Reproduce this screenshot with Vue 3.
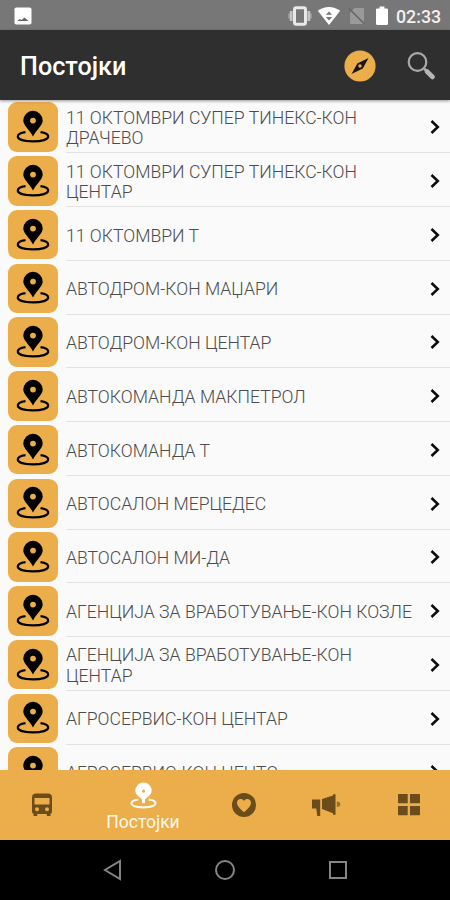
<script setup>
const stops = [
  '11 ОКТОМВРИ СУПЕР ТИНЕКС-КОН ДРАЧЕВО',
  '11 ОКТОМВРИ СУПЕР ТИНЕКС-КОН ЦЕНТАР',
  '11 ОКТОМВРИ Т',
  'АВТОДРОМ-КОН МАЏАРИ',
  'АВТОДРОМ-КОН ЦЕНТАР',
  'АВТОКОМАНДА МАКПЕТРОЛ',
  'АВТОКОМАНДА Т',
  'АВТОСАЛОН МЕРЦЕДЕС',
  'АВТОСАЛОН МИ-ДА',
  'АГЕНЦИЈА ЗА ВРАБОТУВАЊЕ-КОН КОЗЛЕ',
  'АГЕНЦИЈА ЗА ВРАБОТУВАЊЕ-КОН ЦЕНТАР',
  'АГРОСЕРВИС-КОН ЦЕНТАР',
  'АГРОСЕРВИС-КОН ЦЕНТО',
]
</script>

<template>
  <div class="screen">
    <div class="status">
      <svg class="picture" width="18" height="18" viewBox="0 0 18 18">
        <rect x="0.5" y="0.5" width="17" height="17" rx="1.8" fill="#fff" />
        <path d="M3.2 14 5.8 12l1.8 1 2.800-2.600 4.200 3.600z" fill="#666" />
      </svg>
      <svg width="24" height="20" viewBox="0 0 24 20">
        <path d="M3.200 5v10M20.800 5v10" stroke="#c4c4c4" stroke-width="2.800" />
        <path d="M1.200 7.500v5M22.800 7.500v5" stroke="#aaa" stroke-width="1.600" />
        <rect x="6.500" y="1.800" width="11" height="16.400" rx="1.800" fill="#777" stroke="#e9e9e9" stroke-width="3" />
      </svg>
      <svg class="wifi" width="24" height="20" viewBox="0 0 24 20">
        <path d="M.8 4.800C7.500-.3 16.500-.3 23.200 4.800L12 19z" fill="#fff" />
        <path d="m8.800 8.800 3.200-3.400 3.200 3.400zM8.800 11h6.400L12 14.400z" fill="#777" />
      </svg>
      <svg class="sim" width="18" height="20" viewBox="0 0 18 20">
        <path d="M6.500 2H16v16H2V7z" fill="#999" />
        <path d="M1 2.500 16.500 18" stroke="#666" stroke-width="1.600" />
      </svg>
      <svg class="battery" width="12" height="20" viewBox="0 0 12 20">
        <path d="M3.600.5h4.800v2H11q1 0 1 1v14q0 1.500-1.500 1.500h-9Q0 19 0 17.500v-14q0-1 1-1h2.600z" fill="#fff" />
      </svg>
      <span class="clock">02:33</span>
    </div>

    <header class="toolbar">
      <h1>Постојки</h1>
      <svg class="compass" width="32" height="32" viewBox="0 0 32 32">
        <circle cx="16" cy="16" r="15.600" fill="#ebae4b" />
        <path d="M24.500 8 18.800 18.600 7.500 24 13.300 13.400z" fill="#171717" />
        <circle cx="16" cy="16" r="1.700" fill="#ebae4b" />
      </svg>
      <svg class="search" width="30" height="30" viewBox="0 0 30 30">
        <circle cx="11.500" cy="11" r="8.800" fill="none" stroke="#a9a9a9" stroke-width="2.200" />
        <path d="m18 17.500 3 3" stroke="#a9a9a9" stroke-width="2.500" />
        <path d="m21 20.500 5.600 5.500" stroke="#b5b5b5" stroke-width="4.600" stroke-linecap="round" />
      </svg>
    </header>

    <main class="list">
      <div v-for="stop in stops" :key="stop" class="row">
        <div class="tile">
          <svg width="34" height="34" viewBox="0 0 34 34">
            <path d="M9.500 22.200C4 23 1.800 24.600 1.800 26.600c0 3 6.400 4.800 15.200 4.800s15.200-1.800 15.200-4.800c0-2-2.200-3.600-7.700-4.400" fill="none" stroke="#000" stroke-width="2.200" />
            <path fill-rule="evenodd" d="M17 .8A9.700 9.700 0 0 0 7.300 10.500C7.300 15.500 13 19 17 26.500 21 19 26.700 15.500 26.700 10.500A9.700 9.700 0 0 0 17 .8zm0 6.900a2.900 2.900 0 1 1 0 5.800 2.900 2.900 0 0 1 0-5.800z" />
          </svg>
        </div>
        <div class="body">
          <span class="name">{{ stop }}</span>
          <svg class="chevron" width="12" height="16" viewBox="0 0 12 16">
            <path d="M2.500 2 8.800 8l-6.300 6" fill="none" stroke="#0a0a0a" stroke-width="2.500" />
          </svg>
        </div>
      </div>
    </main>

    <nav class="tabs">
      <div class="tab">
        <svg width="22" height="24" viewBox="0 0 22 24">
          <path fill="#6b4d1b" fill-rule="evenodd" d="M5 .5h12q4 0 4 4V19q0 1.200-1.500 1.800V23h-3.700v-2H6.200v2H2.500v-2.200Q1 20.200 1 19V4.500q0-4 4-4zM3.500 5v6.500h15V5zM6 14.200a2 2 0 1 0 0 4 2 2 0 0 0 0-4zm10 0a2 2 0 1 0 0 4 2 2 0 0 0 0-4z" />
        </svg>
      </div>
      <div class="tab active">
        <svg width="27" height="28" viewBox="0 0 34 34">
          <path d="M10.500 21.400C4 22.200 1.800 24 1.800 26.200c0 3.200 6.400 5 15.200 5s15.200-1.800 15.200-5c0-2.200-2.200-4-8.700-4.800" fill="none" stroke="#fffaf0" stroke-width="2.800" />
          <path fill="#fff" fill-rule="evenodd" d="M17 0A10.300 10.300 0 0 0 6.700 10.300C6.700 15.800 13 18.500 15.200 21.500v4.500h3.600v-4.500C21 18.500 27.300 15.800 27.300 10.300A10.300 10.300 0 0 0 17 0zm0 8.800a2 2 0 1 1 0 4 2 2 0 0 1 0-4z" />
        </svg>
        <span>Постојки</span>
      </div>
      <div class="tab">
        <svg width="24" height="24" viewBox="0 0 24 24">
          <circle cx="12" cy="12" r="12" fill="#6b4d1b" />
          <path d="M12 19.300C8 15.700 5 13 5 9.500 5 6 9.800 4.700 12 8c2.200-3.300 7-2 7 1.500 0 3.500-3 6.200-7 9.800z" fill="#ebae4b" />
        </svg>
      </div>
      <div class="tab">
        <svg width="30" height="24" viewBox="0 0 30 24">
          <path fill="#6b4d1b" d="M1 6.500h8.200V23H6.300l-1.100-7.500H1zM11 6l11-3.500V1.200h2.500v20.600H22v-1.500L11 16z" />
          <path fill="#9b7128" d="M25.800 8.500q3.500 0 3.500 2.700t-3.500 2.700z" />
        </svg>
      </div>
      <div class="tab">
        <svg width="24" height="24" viewBox="0 0 24 24">
          <path fill="#6b4d1b" d="M1.500 1h9.200v9.300H1V1.500zM13 1h9.500l.5.500v8.800H13zM1 13h9.700v9.300H1.500L1 21.800zM13 13h10v8.800l-.5.500H13z" />
        </svg>
      </div>
    </nav>

    <footer class="system">
      <svg width="22" height="22" viewBox="0 0 22 22"><path d="M18 2v18L3 11z" /></svg>
      <svg width="22" height="22" viewBox="0 0 22 22"><circle cx="11" cy="11" r="9" /></svg>
      <svg width="22" height="22" viewBox="0 0 22 22"><rect x="3" y="3" width="16" height="16" /></svg>
    </footer>
  </div>
</template>

<style>
body {
  margin: 0;
  overflow: hidden;
}
</style>

<style scoped>
.screen {
  width: 450px;
  height: 900px;
  display: flex;
  flex-direction: column;
  overflow: hidden;
  background: #fafafa;
  font-family: Roboto, "Noto Sans", sans-serif;
}
svg {
  display: block;
  flex: none;
}
.status {
  height: 30px;
  flex: none;
  box-sizing: border-box;
  display: flex;
  align-items: center;
  padding: 1px 8px 0 14px;
  background: #777;
}
.picture {
  margin-right: auto;
}
.wifi {
  margin-left: 5px;
}
.sim {
  margin-left: 7px;
}
.battery {
  margin-left: 10px;
}
.clock {
  width: 46px;
  margin-left: 8px;
  padding-top: 1px;
  font-size: 17.8px;
  font-weight: 500;
  color: #f2f2f2;
  white-space: nowrap;
}
.toolbar {
  height: 70px;
  flex: none;
  box-sizing: border-box;
  display: flex;
  align-items: center;
  padding: 1px 14px 0 20px;
  background: #2f2f2f;
  position: relative;
  box-shadow: 0 1px 3px rgba(0, 0, 0, 0.4);
}
h1 {
  margin: 3px auto 0 0;
  font-size: 25.2px;
  line-height: 30px;
  font-weight: 500;
  color: #fff;
}
.compass {
  margin-right: 30px;
}
.list {
  flex: 1;
  min-height: 0;
  overflow: hidden;
  padding-top: 2.4px;
}
.row {
  height: 53.75px;
  display: flex;
  align-items: flex-start;
  padding-left: 8px;
}
.tile {
  width: 50px;
  height: 49.5px;
  flex: none;
  display: flex;
  align-items: center;
  justify-content: center;
  border-radius: 9px;
  background: #ebae4b;
}
.body {
  flex: 1;
  height: 51px;
  box-sizing: border-box;
  display: flex;
  align-items: center;
  margin-left: 8px;
  padding-right: 9px;
  border-bottom: 1px solid #e2e2e2;
}
.name {
  width: 350px;
  padding-top: 2px;
  font-size: 17.63px;
  line-height: 20.5px;
  font-weight: 300;
  color: #4c4c4c;
}
.chevron {
  margin-left: auto;
}
.tabs {
  height: 70px;
  flex: none;
  display: grid;
  grid-template-columns: 83px 120px 82px 82px 83px;
  background: #ebae4b;
}
.tab {
  display: flex;
  flex-direction: column;
  align-items: center;
  justify-content: center;
}
.active {
  justify-content: flex-start;
  padding-top: 12px;
}
.active span {
  margin-top: 1px;
  font-size: 17.5px;
  line-height: 22px;
  color: #fff8ea;
}
.system {
  height: 60px;
  flex: none;
  display: grid;
  grid-template-columns: repeat(3, 112.5px);
  justify-content: center;
  justify-items: center;
  align-items: center;
  background: #000;
}
.system svg {
  fill: none;
  stroke: #858585;
  stroke-width: 2;
}
</style>
